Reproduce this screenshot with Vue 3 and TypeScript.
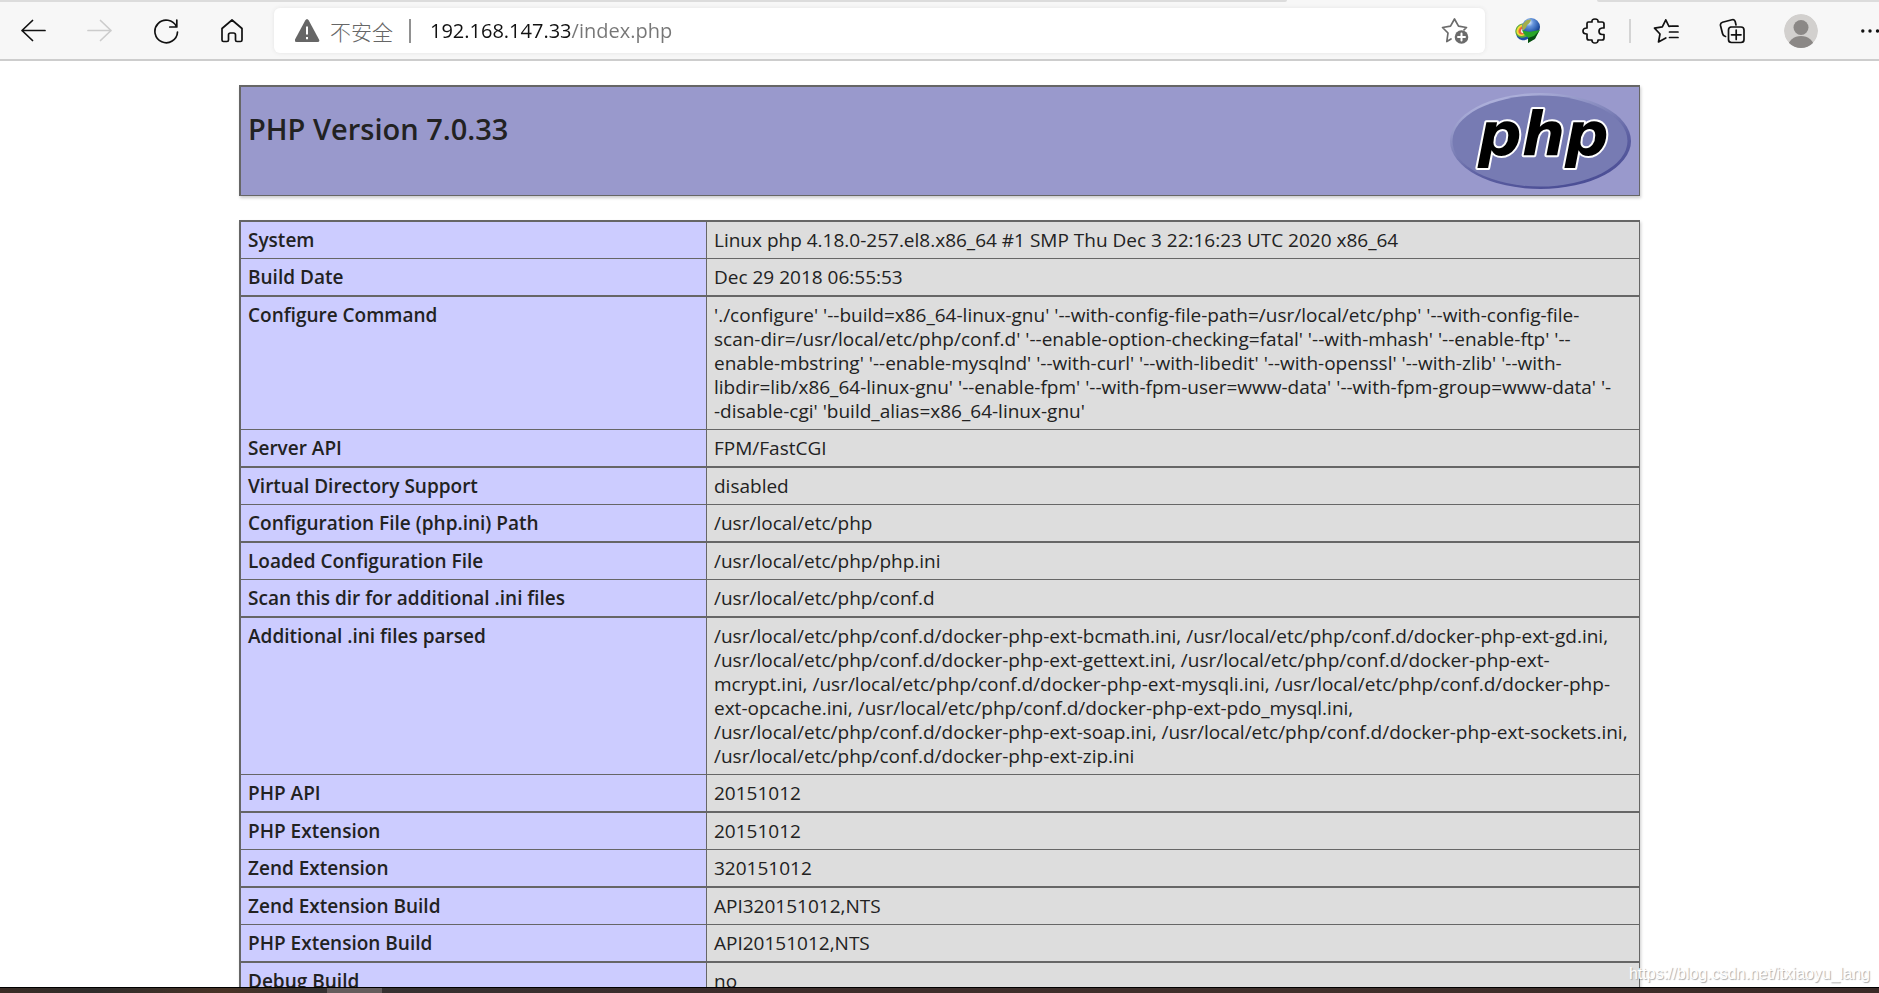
<script setup lang="ts">
interface InfoRow {
  name: string
  lines: string[]
}

const address = '192.168.147.33/index.php'

const rows: InfoRow[] = [
  { name: 'System', lines: ['Linux php 4.18.0-257.el8.x86_64 #1 SMP Thu Dec 3 22:16:23 UTC 2020 x86_64'] },
  { name: 'Build Date', lines: ['Dec 29 2018 06:55:53'] },
  {
    name: 'Configure Command',
    lines: [
      "'./configure' '--build=x86_64-linux-gnu' '--with-config-file-path=/usr/local/etc/php' '--with-config-file-",
      "scan-dir=/usr/local/etc/php/conf.d' '--enable-option-checking=fatal' '--with-mhash' '--enable-ftp' '--",
      "enable-mbstring' '--enable-mysqlnd' '--with-curl' '--with-libedit' '--with-openssl' '--with-zlib' '--with-",
      "libdir=lib/x86_64-linux-gnu' '--enable-fpm' '--with-fpm-user=www-data' '--with-fpm-group=www-data' '-",
      "-disable-cgi' 'build_alias=x86_64-linux-gnu'",
    ],
  },
  { name: 'Server API', lines: ['FPM/FastCGI'] },
  { name: 'Virtual Directory Support', lines: ['disabled'] },
  { name: 'Configuration File (php.ini) Path', lines: ['/usr/local/etc/php'] },
  { name: 'Loaded Configuration File', lines: ['/usr/local/etc/php/php.ini'] },
  { name: 'Scan this dir for additional .ini files', lines: ['/usr/local/etc/php/conf.d'] },
  {
    name: 'Additional .ini files parsed',
    lines: [
      '/usr/local/etc/php/conf.d/docker-php-ext-bcmath.ini, /usr/local/etc/php/conf.d/docker-php-ext-gd.ini,',
      '/usr/local/etc/php/conf.d/docker-php-ext-gettext.ini, /usr/local/etc/php/conf.d/docker-php-ext-',
      'mcrypt.ini, /usr/local/etc/php/conf.d/docker-php-ext-mysqli.ini, /usr/local/etc/php/conf.d/docker-php-',
      'ext-opcache.ini, /usr/local/etc/php/conf.d/docker-php-ext-pdo_mysql.ini,',
      '/usr/local/etc/php/conf.d/docker-php-ext-soap.ini, /usr/local/etc/php/conf.d/docker-php-ext-sockets.ini,',
      '/usr/local/etc/php/conf.d/docker-php-ext-zip.ini',
    ],
  },
  { name: 'PHP API', lines: ['20151012'] },
  { name: 'PHP Extension', lines: ['20151012'] },
  { name: 'Zend Extension', lines: ['320151012'] },
  { name: 'Zend Extension Build', lines: ['API320151012,NTS'] },
  { name: 'PHP Extension Build', lines: ['API20151012,NTS'] },
  { name: 'Debug Build', lines: ['no'] },
]
</script>

<template>
  <div class="window">
    <div class="tabs">
      <span class="strip left"></span>
      <span class="strip right"></span>
    </div>
    <header class="toolbar">
      <button type="button" class="tool" aria-label="Back">
        <svg width="26" height="26" viewBox="0 0 26 26"><path d="M24 12.500H1M11.500 2.500L1 12.500l10.500 10" /></svg>
      </button>
      <button type="button" class="tool" aria-label="Forward" disabled>
        <svg width="26" height="26" viewBox="0 0 26 26"><path d="M1 12.500h23M13.500 2.500L24 12.500l-10.500 10" /></svg>
      </button>
      <button type="button" class="tool" aria-label="Refresh">
        <svg width="26" height="26" viewBox="0 0 26 26"><path d="M23.400 8.500A11.300 11.300 0 1 0 24.500 14M23.800 2v7h-7" /></svg>
      </button>
      <button type="button" class="tool" aria-label="Home">
        <svg width="26" height="26" viewBox="0 0 26 26"><path d="M3 10.500L13 2l10 8.500V22q0 1.500-1.500 1.500H18q-1.500 0-1.500-1.500v-5q0-2-2-2h-3q-2 0-2 2v5q0 1.500-1.500 1.500H4.500Q3 23.500 3 22z" /></svg>
      </button>
      <div class="address">
        <button type="button" class="security">
          <svg width="26" height="26" viewBox="0 0 26 26">
            <path class="warn" d="M10.200 2.500q1.800-3 3.600 0L24 21.500q1.200 2.500-1.500 2.500h-21Q-1 24 0 21.500z" />
            <path class="mark" d="M12 8.500v8M12 19v2.300" />
          </svg>
          <span>不安全</span>
        </button>
        <span class="bar"></span>
        <input class="url" type="text" aria-label="Address" spellcheck="false" :value="address" />
        <button type="button" class="favorite" aria-label="Add to favorites">
          <svg width="28" height="28" viewBox="0 0 28 28">
            <path d="M10 22L5.800 24.500 7 16 1.500 10.500l8-1.300L13.500 2l4 7.200 8 1.300-2.500 2.400" />
            <circle cx="20.500" cy="20" r="6.800" />
            <path class="plus" d="M20.500 16.500v7M17 20h7" />
          </svg>
        </button>
      </div>
      <button type="button" class="tool" aria-label="Download manager">
        <svg class="globe" width="26" height="26" viewBox="0 0 26 26">
          <defs>
            <radialGradient id="sphere" cx=".4" cy=".25" r=".75">
              <stop offset="0" stop-color="#e6f2fb" />
              <stop offset=".3" stop-color="#6796dd" />
              <stop offset=".75" stop-color="#2455a8" />
              <stop offset="1" stop-color="#102d69" />
            </radialGradient>
          </defs>
          <g transform="translate(-1 -1)">
            <ellipse cx="10" cy="16" rx="8" ry="7" fill="#1f50a6" transform="rotate(-35 10 16)" />
            <ellipse cx="9" cy="13.500" rx="8" ry="7" fill="#59a83b" transform="rotate(-35 9 13.500)" />
            <ellipse cx="9" cy="13" rx="7" ry="5.500" fill="#f3dd39" transform="rotate(-35 9 13)" />
            <ellipse cx="9.500" cy="13" rx="5.500" ry="4" fill="#e8603f" transform="rotate(-35 9.500 13)" />
            <ellipse cx="10.500" cy="13" rx="4" ry="2.500" fill="#f8f0e8" transform="rotate(-35 10.500 13)" />
            <circle cx="17" cy="10" r="9" fill="url(#sphere)" />
            <path class="land" d="M9 7q3-5 8-4.500-1 4-3.500 5-1.500 4-4 6Q7 11 9 7z" />
            <path class="arrow" d="M8 13q7 3 12 1l6-1-5 8-7 5 1-5q-5-2-7-8z" />
            <path class="shade" d="M14 21l6-2 5-5-4 8-7 4z" />
          </g>
        </svg>
      </button>
      <button type="button" class="tool" aria-label="Extensions">
        <svg width="26" height="26" viewBox="0 0 26 26"><path d="M6 5.500Q6 4 7.500 4H11q-.5-3 3-3t3 3h4q2 0 2 2v4h-2q-3 .3-3 3.300t3 3.200h2V20q0 2-2 2h-4q.2 3-3 3t-3-3H8q-2 0-2-2v-4q-4 0-4-3t4-3z" /></svg>
      </button>
      <span class="divider"></span>
      <button type="button" class="tool" aria-label="Favorites">
        <svg width="26" height="26" viewBox="0 0 26 26"><path d="M17.500 8.200L16 8.500 12.800 1.800 9.300 8.800 1.500 10.200 7 16 5.500 24l7.300-4M18.500 8.200H25M16.500 14H25M16.500 19.500H25" /></svg>
      </button>
      <button type="button" class="tool" aria-label="Collections">
        <svg width="26" height="26" viewBox="0 0 26 26"><path d="M6.500 18.500Q4 18 3.500 15.500L1.500 7.500Q1 5 3.500 4.200l9.500-2.500q2.500-.7 3.200 1.800l.8 3.500M11.500 9H22q3 0 3 3v9.500q0 3-3 3h-9.500q-3 0-3-3V12q0-3 3-3zM17.200 12v9.500M12.500 16.800H22" /></svg>
      </button>
      <button type="button" class="tool profile" aria-label="Profile">
        <svg width="34" height="34" viewBox="0 0 34 34">
          <defs><clipPath id="disc"><circle cx="17" cy="17" r="17" /></clipPath></defs>
          <g clip-path="url(#disc)">
            <circle cx="17" cy="17" r="17" fill="#d2d0ce" />
            <circle cx="17" cy="13.500" r="7.500" fill="#8b8886" />
            <ellipse cx="17" cy="33" rx="13" ry="11" fill="#8b8886" />
          </g>
        </svg>
      </button>
      <button type="button" class="more" aria-label="Settings and more">
        <svg width="18" height="26" viewBox="0 0 18 26">
          <circle cx="1.800" cy="13" r="1.700" /><circle cx="9" cy="13" r="1.700" /><circle cx="16.500" cy="13" r="1.700" />
        </svg>
      </button>
    </header>

    <main class="page">
      <section class="banner">
        <h1>PHP Version 7.0.33</h1>
        <a href="http://www.php.net/" aria-label="PHP logo">
          <svg width="181" height="96" viewBox="0 0 181 96">
            <defs>
              <linearGradient id="rim" x1=".25" y1="0" x2=".75" y2="1">
                <stop offset="0" stop-color="#b5b8e0" />
                <stop offset=".45" stop-color="#777bb3" />
                <stop offset=".65" stop-color="#5c5fa1" />
                <stop offset="1" stop-color="#484b93" />
              </linearGradient>
            </defs>
            <ellipse cx="90.500" cy="48" rx="90.500" ry="48" fill="url(#rim)" />
            <ellipse cx="90" cy="48" rx="87.500" ry="45.500" fill="#777bb3" />
            <text x="28" y="62">php</text>
          </svg>
        </a>
      </section>

      <table class="info">
        <tbody>
          <tr v-for="row in rows" :key="row.name">
            <th scope="row">{{ row.name }}</th>
            <td><template v-for="(line, i) in row.lines" :key="i"><br v-if="i > 0" />{{ line }}</template></td>
          </tr>
        </tbody>
      </table>
    </main>

    <div class="watermark">https://blog.csdn.net/itxiaoyu_lang</div>
    <footer class="taskbar"><span class="task"></span></footer>
  </div>
</template>

<style>
body {
  margin: 0;
  overflow: hidden;
}
</style>

<style scoped>
.window {
  position: relative;
  display: flex;
  flex-direction: column;
  height: 100vh;
  overflow: hidden;
  background: #fff;
  color: #222;
  font-family: "Open Sans", "Noto Sans", "Noto Sans CJK SC", sans-serif;
}

.tabs {
  flex: none;
  display: flex;
  justify-content: space-between;
  height: 2px;
  background: #f7f7f7;
}

.strip {
  background: #dcdcdc;
}

.strip.left {
  width: 68.5%;
  border-bottom-right-radius: 2px;
}

.strip.right {
  width: 15%;
  border-bottom-left-radius: 2px;
}

.toolbar {
  flex: none;
  display: flex;
  align-items: center;
  height: 57px;
  padding-left: 1px;
  background: #f7f7f7;
  border-bottom: 2px solid #cdcdcd;
}

button {
  display: flex;
  align-items: center;
  justify-content: center;
  padding: 0;
  border: 0;
  background: none;
  font: inherit;
  color: #111;
}

.tool {
  flex: none;
  width: 66px;
  height: 44px;
}

.tool:disabled {
  color: #ccc;
}

svg {
  display: block;
  flex: none;
}

.toolbar path {
  fill: none;
  stroke: currentColor;
  stroke-width: 1.7;
  stroke-linecap: round;
  stroke-linejoin: round;
}

.toolbar .globe path {
  stroke: none;
}

.toolbar .globe .land {
  fill: #a3ae4a;
}

.toolbar .globe .arrow {
  fill: #27a527;
}

.toolbar .globe .shade {
  fill: #074e12;
}

.address {
  flex: 1;
  display: flex;
  align-items: center;
  height: 45px;
  margin: 0 10px 0 9px;
  padding: 0 16px 0 21px;
  box-sizing: border-box;
  border-radius: 6px;
  background: #fff;
  box-shadow: 0 0 4px #e4e4e4;
}

.security {
  gap: 9px;
  font-family: "Noto Sans CJK SC", sans-serif;
  font-size: 21px;
  font-weight: 300;
  line-height: 28px;
  color: #666;
}

.toolbar .warn {
  fill: #666;
  stroke: none;
}

.toolbar .mark {
  stroke: #fff;
  stroke-width: 2;
  stroke-linecap: butt;
}

.bar {
  width: 2px;
  height: 24px;
  margin: 0 19px 0 16px;
  background: #919191;
}

.url {
  flex: 1;
  min-width: 0;
  height: 32px;
  padding: 0;
  border: 0;
  outline: 0;
  font-family: "Open Sans", sans-serif;
  font-size: 20px;
  color: transparent;
  background: linear-gradient(90deg, #111 141px, #767676 141px);
  background-clip: text;
}

.favorite {
  color: #6b6b6b;
}

.favorite circle {
  fill: #6b6b6b;
}

.favorite .plus {
  stroke: #fff;
  stroke-width: 2;
}

.divider {
  width: 2px;
  height: 24px;
  margin: 0 2px;
  background: #d4d4d4;
}

.profile {
  margin: 0 3px;
}

.more {
  flex: none;
  justify-content: flex-end;
  width: 42px;
}

.more circle {
  fill: #111;
}

.page {
  flex: 1;
  min-height: 0;
  overflow: hidden;
  padding: 24px 0 0;
}

.banner {
  display: flex;
  justify-content: space-between;
  align-items: flex-start;
  width: 1401px;
  max-width: 100%;
  margin: 0 auto 24px;
  padding: 6px 8px 6px 7px;
  box-sizing: border-box;
  border: solid #666;
  border-width: 2px 1px 1px 2px;
  background: #9999cc;
  box-shadow: 1px 2px 3px #ccc;
}

h1 {
  margin: 16px 0 0;
  font-size: 29px;
  line-height: 40px;
  font-weight: 600;
}

.banner text {
  font-family: "DejaVu Sans", sans-serif;
  font-size: 61px;
  font-weight: 700;
  font-style: italic;
  fill: #000;
  stroke: #fff;
  stroke-width: 4px;
  stroke-linejoin: round;
  paint-order: stroke;
}

.info {
  width: 1401px;
  max-width: 100%;
  margin: 0 auto;
  border-collapse: separate;
  border-spacing: 0;
  table-layout: fixed;
  border: solid #666;
  border-width: 0 1px 0 2px;
  box-shadow: 1px 2px 3px #ccc;
}

th,
td {
  padding: 6px 7px;
  border-top: 1px solid #666;
  vertical-align: top;
  text-align: left;
  font-size: 19px;
  line-height: 24px;
}

tr:nth-child(odd) > * {
  border-top-width: 2px;
}

th {
  width: 451px;
  background: #ccccff;
  font-weight: 600;
}

td {
  border-left: 1px solid #666;
  background: #ddd;
  white-space: nowrap;
}

.watermark {
  position: absolute;
  right: 9px;
  bottom: 9px;
  font-family: "Liberation Sans", sans-serif;
  font-size: 16px;
  line-height: 20px;
  color: #fff;
  text-shadow: 1px 1px 1px #aaa;
}

.taskbar {
  flex: none;
  height: 5px;
  padding-left: 327px;
  border-top: 1px solid #000;
  background: linear-gradient(90deg, #3a2c25, #302d2b 5%, #493326 12%, #353232 17%, #3d2d2b 40%, #40302b 70%, #3a2a27);
}

.task {
  display: block;
  width: 55px;
  height: 5px;
  background: #655d5d;
}
</style>
